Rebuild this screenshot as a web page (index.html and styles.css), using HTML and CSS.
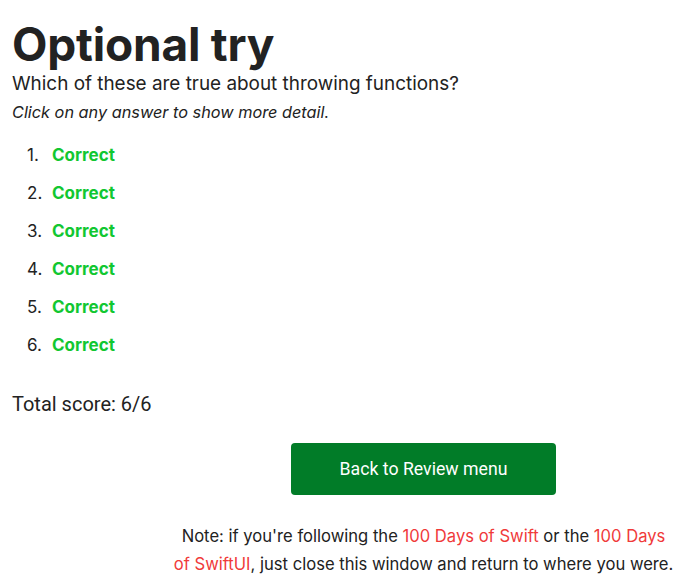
FILE: index.html
```html
<!DOCTYPE html>
<html>
<head>
<meta charset="utf-8">
<link rel="stylesheet" href="styles.css">
</head>
<body>
<main class="page">
  <h1 class="title">Optional try</h1>
  <p class="question">Which of these are true about throwing functions?</p>
  <p class="hint">Click on any answer to show more detail.</p>
  <ol class="answers">
    <li><span class="correct">Correct</span></li>
    <li><span class="correct">Correct</span></li>
    <li><span class="correct">Correct</span></li>
    <li><span class="correct">Correct</span></li>
    <li><span class="correct">Correct</span></li>
    <li><span class="correct">Correct</span></li>
  </ol>
  <p class="score">Total score: 6/6</p>
  <div class="footer">
    <a class="btn" href="#">Back to Review menu</a>
    <p class="note">Note: if you're following the <a href="#">100 Days of Swift</a> or the <a href="#">100 Days of SwiftUI</a>, just close this window and return to where you were.</p>
  </div>
</main>
</body>
</html>
```

FILE: styles.css
```css
html, body {
  margin: 0;
  padding: 0;
  background: #fff;
}
body {
  font-family: Inter, "Noto Sans", sans-serif;
  color: #222;
}
.page {
  padding: 0 12px;
}
.title {
  font-size: 46px;
  font-weight: 700;
  line-height: 56px;
  margin: 16px 0 0;
  letter-spacing: -0.2px;
}
.question {
  font-size: 18.9px;
  line-height: 24px;
  margin: 0;
}
.hint {
  font-size: 16.3px;
  font-style: italic;
  line-height: 24px;
  margin: 4px 0 0;
}
.answers {
  list-style: none;
  counter-reset: item;
  margin: 19px 0 0;
  padding-left: 15px;
  font-size: 17px;
}
.answers li {
  counter-increment: item;
  display: flex;
  line-height: 24px;
  margin-bottom: 14px;
}
.answers li::before {
  content: counter(item) ".";
  width: 25px;
}
.correct {
  color: #11c731;
  font-weight: 700;
}
.score {
  font-family: Roboto, sans-serif;
  font-size: 20px;
  margin: 35px 0 0;
  line-height: 24px;
}
.footer {
  margin: 27px 0 0 155px;
  display: flex;
  flex-direction: column;
  align-items: center;
}
.btn {
  display: flex;
  align-items: center;
  justify-content: center;
  width: 265px;
  height: 52px;
  background: #017c28;
  color: #fff;
  border-radius: 4px;
  text-decoration: none;
  font-family: Roboto, sans-serif;
  font-size: 17.7px;
}
.note {
  width: 500px;
  text-align: center;
  font-size: 16.6px;
  line-height: 28px;
  margin: 27px 0 0;
}
.note a {
  color: #f03a3a;
  text-decoration: none;
}
```
